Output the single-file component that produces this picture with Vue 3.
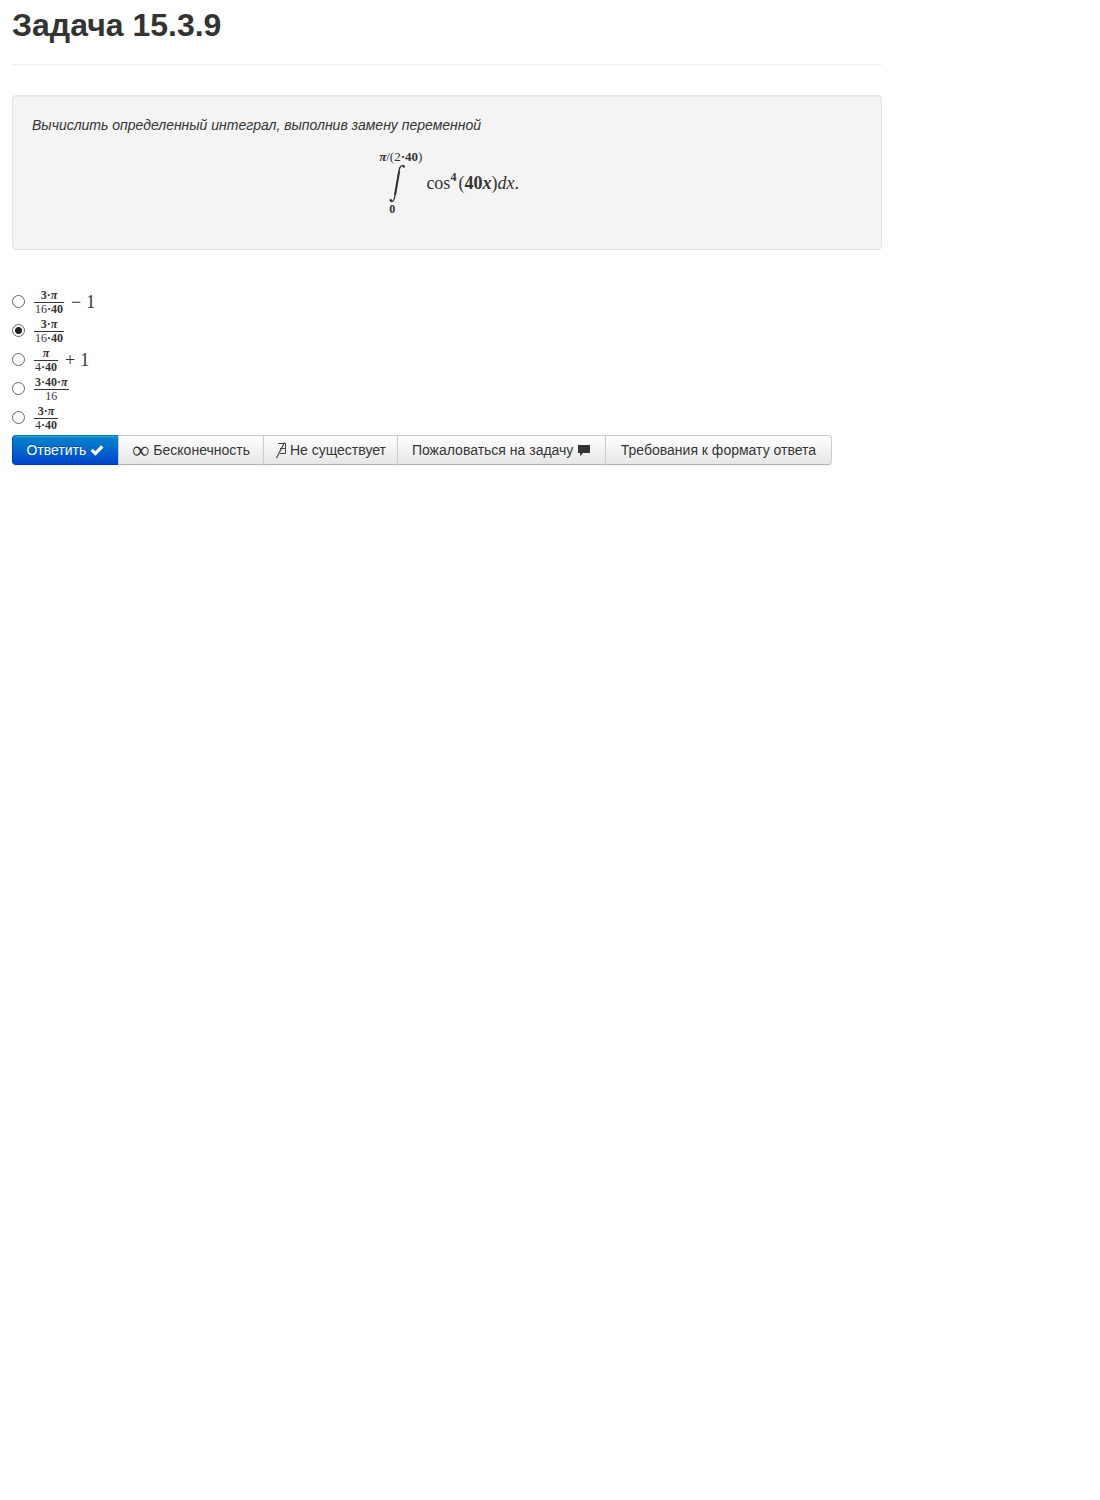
<script setup>
import { ref } from 'vue'

const selected = ref(1)

const bold = (t) => ({ t, b: true })
const dot = { t: '·', dot: true }
const pi = { t: 'π', pi: true }

const options = [
  { top: [bold('3'), dot, pi], bottom: [{ t: '16' }, dot, bold('40')], sign: '−' },
  { top: [bold('3'), dot, pi], bottom: [{ t: '16' }, dot, bold('40')] },
  { top: [pi], bottom: [{ t: '4' }, dot, bold('40')], sign: '+' },
  { top: [bold('3'), dot, bold('40'), dot, pi], bottom: [{ t: '16' }] },
  { top: [bold('3'), dot, pi], bottom: [{ t: '4' }, dot, bold('40')] },
]
</script>

<template>
  <main class="page">
    <h1>Задача 15.3.9</h1>
    <hr />

    <section class="well">
      <p class="statement">Вычислить определенный интеграл, выполнив замену переменной</p>
      <div class="formula math">
        <div class="integral">
          <span class="limit"><b><i>π</i></b>/(2<span class="dot">·</span><b>40</b>)</span>
          <svg class="sign" width="18" height="39" viewBox="0 0 18 39" aria-label="∫">
            <path d="M1.200 36.300C3 39 5.200 37 6 32L10 7C10.800 2 12.800 .4 15.300 2.400" fill="none" stroke="#333" stroke-width="1.300" />
            <path d="M6 31L10.200 7" stroke="#333" stroke-width="2" />
            <circle cx="1.800" cy="36.200" r="1.200" fill="#333" />
            <circle cx="14.800" cy="2.500" r="1.200" fill="#333" />
          </svg>
          <span class="limit lower"><b>0</b></span>
        </div>
        <span class="integrand">cos<sup>4</sup>(<b>40<i>x</i></b>)<i>dx</i>.</span>
      </div>
    </section>

    <form @submit.prevent>
      <div class="options">
        <label v-for="(o, i) in options" :key="i" class="option">
          <input v-model="selected" type="radio" name="answer" :value="i" />
          <span class="fraction math">
            <span class="part">
              <span v-for="(p, k) in o.top" :key="k" :class="{ bold: p.b, dot: p.dot, pi: p.pi }">{{ p.t }}</span>
            </span>
            <span class="part bottom">
              <span v-for="(p, k) in o.bottom" :key="k" :class="{ bold: p.b, dot: p.dot }">{{ p.t }}</span>
            </span>
          </span>
          <span v-if="o.sign" class="tail math"><span>{{ o.sign }}</span><span>1</span></span>
        </label>
      </div>

      <div class="actions">
        <button type="submit" class="primary">
          Ответить
          <svg width="14" height="14" viewBox="0 0 14 14" aria-hidden="true">
            <path d="M0.500 8L2.800 5.700L5.300 8.200L11 2.200L13.500 4.500L5.500 12.800Z" fill="#fff" />
          </svg>
        </button>
        <button type="button"><span class="infinity">∞</span>Бесконечность</button>
        <button type="button" class="missing">
          <svg width="12" height="18" viewBox="0 0 12 18" aria-hidden="true">
            <path d="M2 2.500H9.500V12.500H4M4 7.500H9.500" fill="none" stroke="#444" />
            <path d="M0.500 17L8.500 1.500" stroke="#444" stroke-width="1.200" />
          </svg>
          Не существует
        </button>
        <button type="button">
          Пожаловаться на задачу
          <svg width="14" height="14" viewBox="0 0 14 14" aria-hidden="true">
            <path d="M1 2H13V10H6L3 13V10H1Z" fill="#333" />
          </svg>
        </button>
        <button type="button">Требования к формату ответа</button>
      </div>
    </form>
  </main>
</template>

<style>
body {
  background: #fff;
}
</style>

<style scoped>
.page {
  max-width: 870px;
  padding: 5px 12px;
  color: #333;
  font: 14px/20px "Liberation Sans", Arial, sans-serif;
}

h1 {
  margin: 0;
  font-size: 32px;
  line-height: 40px;
}

hr {
  height: 0;
  margin: 19px 0 30px;
  border: 0;
  border-top: 1px solid #eee;
}

.well {
  padding: 19px;
  background: #f4f4f4;
  border: 1px solid #e3e3e3;
  border-radius: 4px;
  box-shadow: inset 0 1px 1px rgba(0, 0, 0, 0.05);
}

.statement {
  margin: 0;
  font-style: italic;
}

.math {
  font-family: "Liberation Serif", "Times New Roman", serif;
}

.formula {
  display: flex;
  justify-content: center;
  align-items: center;
  gap: 4px;
  margin: 15px 0;
  padding-left: 4px;
}

.integral {
  display: flex;
  flex-direction: column;
  align-items: flex-start;
}

.limit {
  font-size: 13px;
  line-height: 14px;
}

.sign {
  display: block;
  margin-left: 10px;
}

.lower {
  margin-left: 10px;
  font-size: 12px;
  line-height: 12px;
}

.integrand {
  font-size: 18px;
  line-height: 20px;
}

sup {
  margin-right: 2px;
  font-size: 12px;
  font-weight: bold;
  line-height: 0;
  vertical-align: 8px;
}

.dot {
  font-weight: bold;
}

.options {
  margin: 37px 0 3px;
}

.option {
  display: flex;
  align-items: center;
  height: 29px;
}

.option input {
  width: 13px;
  height: 13px;
  margin: 0 9px 1px 0;
  appearance: none;
  background: #fff;
  border: 1px solid #666;
  border-radius: 50%;
}

.option input:checked {
  background: radial-gradient(circle, #222 3px, #fff 4px);
}

.fraction {
  display: flex;
  flex-direction: column;
  padding-top: 1px;
  font-size: 12px;
  line-height: 13px;
  text-align: center;
}

.part {
  display: flex;
  justify-content: center;
  padding: 0 1px;
}

.part.bottom {
  border-top: 1px solid #333;
}

.bold {
  font-weight: bold;
}

.pi {
  font-style: italic;
  font-weight: bold;
}

.tail {
  display: flex;
  gap: 5px;
  margin-left: 7px;
  font-size: 18px;
}

.actions {
  display: flex;
  flex-wrap: wrap;
  max-width: 820px;
}

button {
  display: flex;
  flex-grow: 1;
  align-items: center;
  justify-content: center;
  gap: 4px;
  margin: 0 0 0 -1px;
  padding: 4px 12px;
  color: #333;
  font: inherit;
  white-space: nowrap;
  text-shadow: 0 1px 1px rgba(255, 255, 255, 0.75);
  background: linear-gradient(#fff, #e6e6e6);
  border: 1px solid #ccc;
  border-bottom-color: #b3b3b3;
  box-shadow: inset 0 1px 0 rgba(255, 255, 255, 0.2), 0 1px 2px rgba(0, 0, 0, 0.05);
}

button:first-child {
  margin-left: 0;
  border-radius: 4px 0 0 4px;
}

button:last-child {
  flex-grow: 2;
  border-radius: 0 4px 4px 0;
}

.primary {
  color: #fff;
  text-shadow: 0 -1px 0 rgba(0, 0, 0, 0.25);
  background: linear-gradient(#08c, #04c);
  border-color: #0074b8 #04c #003cb3;
}

.missing {
  gap: 2px;
  padding: 4px 10px;
}

.infinity {
  font: 24px/20px "Liberation Serif", "Times New Roman", serif;
}
</style>
